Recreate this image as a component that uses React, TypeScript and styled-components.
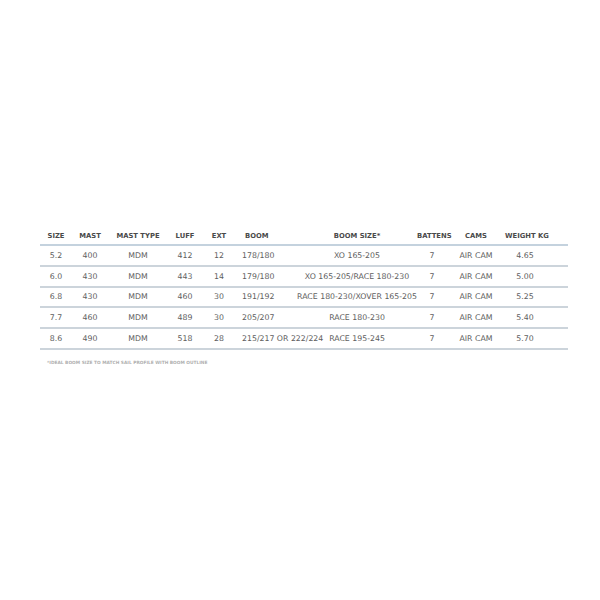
import React from "react";
import styled, { createGlobalStyle } from "styled-components";

const Global = createGlobalStyle`
  html, body { margin: 0; padding: 0; background: #ffffff; }
  body { width: 600px; height: 600px; overflow: hidden; font-family: "DejaVu Sans", "Liberation Sans", sans-serif; }
`;

const Page = styled.div`
  width: 600px;
  height: 600px;
  padding: 227px 32px 0 40px;
  box-sizing: border-box;
`;

const Table = styled.table`
  width: 528px;
  border-collapse: collapse;
  table-layout: fixed;
`;

type Align = "left" | "center";

const Th = styled.th<{ $align?: Align; $pad?: number }>`
  font-family: "DejaVu Sans", "Liberation Sans", sans-serif;
  font-weight: bold;
  font-size: 6.8px;
  color: #4a4a4a;
  height: 17px;
  padding: 0 ${(p) => p.$pad ?? 0}px 0 ${(p) => (p.$align === "left" ? 9 : 0)}px;
  text-align: ${(p) => p.$align ?? "center"};
  white-space: nowrap;
  border-bottom: 2px solid #c4d2de;
  vertical-align: middle;
`;

const Td = styled.td<{ $align?: Align; $pad?: number }>`
  font-family: "DejaVu Sans", "Liberation Sans", sans-serif;
  font-size: 7.8px;
  color: #5e5e5e;
  height: 18.8px;
  padding: 0 ${(p) => p.$pad ?? 0}px 0 ${(p) => (p.$align === "left" ? 6 : 0)}px;
  text-align: ${(p) => p.$align ?? "center"};
  white-space: nowrap;
  overflow: visible;
  border-bottom: 2px solid #ccd4db;
  vertical-align: middle;
`;

const Footnote = styled.div`
  margin: 10px 0 0 7px;
  font-family: "DejaVu Sans", "Liberation Sans", sans-serif;
  font-size: 4.35px;
  font-weight: bold;
  color: #b0b0b0;
  white-space: nowrap;
`;

const cols = [32, 36, 60, 34, 34, 61, 120, 30, 58, 63];

const headers: { label: string; align?: Align; pad?: number }[] = [
  { label: "SIZE" },
  { label: "MAST" },
  { label: "MAST TYPE" },
  { label: "LUFF" },
  { label: "EXT" },
  { label: "BOOM", align: "left" },
  { label: "BOOM SIZE*" },
  { label: "BATTENS" },
  { label: "CAMS" },
  { label: "WEIGHT KG", pad: 23 },
];

const rows = [
  ["5.2", "400", "MDM", "412", "12", "178/180", "XO 165-205", "7", "AIR CAM", "4.65"],
  ["6.0", "430", "MDM", "443", "14", "179/180", "XO 165-205/RACE 180-230", "7", "AIR CAM", "5.00"],
  ["6.8", "430", "MDM", "460", "30", "191/192", "RACE 180-230/XOVER 165-205", "7", "AIR CAM", "5.25"],
  ["7.7", "460", "MDM", "489", "30", "205/207", "RACE 180-230", "7", "AIR CAM", "5.40"],
  ["8.6", "490", "MDM", "518", "28", "215/217 OR 222/224", "RACE 195-245", "7", "AIR CAM", "5.70"],
];

export default function App() {
  return (
    <>
      <Global />
      <Page>
        <Table>
          <colgroup>
            {cols.map((w, i) => (
              <col key={i} style={{ width: w }} />
            ))}
          </colgroup>
          <thead>
            <tr>
              {headers.map((h) => (
                <Th key={h.label} $align={h.align} $pad={h.pad}>
                  {h.label}
                </Th>
              ))}
            </tr>
          </thead>
          <tbody>
            {rows.map((r) => (
              <tr key={r[0]}>
                {r.map((c, i) => (
                  <Td key={i} $align={headers[i].align} $pad={headers[i].pad}>
                    {c}
                  </Td>
                ))}
              </tr>
            ))}
          </tbody>
        </Table>
        <Footnote>*IDEAL BOOM SIZE TO MATCH SAIL PROFILE WITH BOOM OUTLINE</Footnote>
      </Page>
    </>
  );
}
